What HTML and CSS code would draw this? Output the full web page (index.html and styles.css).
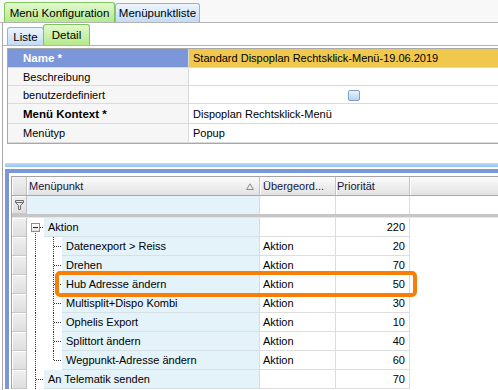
FILE: index.html
```html
<!DOCTYPE html>
<html>
<head>
<meta charset="utf-8">
<link rel="stylesheet" href="styles.css">
</head>
<body>
<div class="top-tabs">
  <div class="tab green t1">Menü Konfiguration</div>
  <div class="tab blue t2">Menüpunktliste</div>
</div>
<div class="main">
  <div class="sub-tabs">
    <div class="tab blue s1">Liste</div>
    <div class="tab green s2">Detail</div>
  </div>
  <div class="form">
    <div class="frow r-name"><div class="flabel name">Name *</div><div class="fval yellow">Standard Dispoplan Rechtsklick-Menü-19.06.2019</div></div>
    <div class="frow r-s"><div class="flabel">Beschreibung</div><div class="fval"></div></div>
    <div class="frow r-s"><div class="flabel">benutzerdefiniert</div><div class="fval"><span class="check"></span></div></div>
    <div class="frow r-l"><div class="flabel bold">Menü Kontext *</div><div class="fval">Dispoplan Rechtsklick-Menü</div></div>
    <div class="frow r-last"><div class="flabel">Menütyp</div><div class="fval">Popup</div></div>
  </div>
  <div class="splitter"></div>
  <div class="gridframe">
    <div class="grid">
      <div class="row hrow">
        <div class="c sel"></div>
        <div class="c mp">Menüpunkt<svg class="sort" width="8" height="7" viewBox="0 0 8 7"><path d="M4 0.8 L7.4 6.5 H0.6 Z" fill="none" stroke="#8a8a8a" stroke-width="1"/></svg></div>
        <div class="c ub">Übergeord...</div>
        <div class="c pr">Priorität</div>
        <div class="c fill"></div>
      </div>
      <div class="row frow2">
        <div class="c sel"><svg width="9" height="10" viewBox="0 0 9 10"><path d="M0.5 0.5 H8.5 V2.5 L5.5 5.5 V9.5 H3.5 V5.5 L0.5 2.5 Z M0.5 2.5 H8.5" fill="none" stroke="#6e6e6e" stroke-width="1"/></svg></div>
        <div class="c mp blue-bg"></div>
        <div class="c ub"></div>
        <div class="c pr"></div>
        <div class="c fill"></div>
      </div>
      <div class="sep"></div>
      <div class="row drow">
        <div class="c sel"></div>
        <div class="c tree"><span class="u1 first"><span class="box"></span></span><span class="lbl">Aktion</span></div>
        <div class="c ub"></div>
        <div class="c pr">220</div>
        <div class="c fill"></div>
      </div>
      <div class="row drow">
        <div class="c sel"></div>
        <div class="c tree"><span class="u1 pass"></span><span class="u2 tee"></span><span class="lbl">Datenexport &gt; Reiss</span></div>
        <div class="c ub">Aktion</div>
        <div class="c pr">20</div>
        <div class="c fill"></div>
      </div>
      <div class="row drow">
        <div class="c sel"></div>
        <div class="c tree"><span class="u1 pass"></span><span class="u2 tee"></span><span class="lbl">Drehen</span></div>
        <div class="c ub">Aktion</div>
        <div class="c pr">70</div>
        <div class="c fill"></div>
      </div>
      <div class="row drow hl">
        <div class="c sel"></div>
        <div class="c tree"><span class="u1 pass"></span><span class="u2 tee"></span><span class="lbl">Hub Adresse ändern</span></div>
        <div class="c ub">Aktion</div>
        <div class="c pr">50</div>
        <div class="c fill"></div>
        <div class="highlight"></div>
      </div>
      <div class="row drow">
        <div class="c sel"></div>
        <div class="c tree"><span class="u1 pass"></span><span class="u2 tee"></span><span class="lbl">Multisplit+Dispo Kombi</span></div>
        <div class="c ub">Aktion</div>
        <div class="c pr">30</div>
        <div class="c fill"></div>
      </div>
      <div class="row drow">
        <div class="c sel"></div>
        <div class="c tree"><span class="u1 pass"></span><span class="u2 tee"></span><span class="lbl">Ophelis Export</span></div>
        <div class="c ub">Aktion</div>
        <div class="c pr">10</div>
        <div class="c fill"></div>
      </div>
      <div class="row drow">
        <div class="c sel"></div>
        <div class="c tree"><span class="u1 pass"></span><span class="u2 tee"></span><span class="lbl">Splittort ändern</span></div>
        <div class="c ub">Aktion</div>
        <div class="c pr">40</div>
        <div class="c fill"></div>
      </div>
      <div class="row drow">
        <div class="c sel"></div>
        <div class="c tree"><span class="u1 pass"></span><span class="u2 elbow"></span><span class="lbl">Wegpunkt-Adresse ändern</span></div>
        <div class="c ub">Aktion</div>
        <div class="c pr">60</div>
        <div class="c fill"></div>
      </div>
      <div class="row drow">
        <div class="c sel"></div>
        <div class="c tree"><span class="u1 tee"></span><span class="lbl">An Telematik senden</span></div>
        <div class="c ub"></div>
        <div class="c pr">70</div>
        <div class="c fill"></div>
      </div>
    </div>
  </div>
</div>
</body>
</html>
```

FILE: styles.css
```css
html, body {
  margin: 0;
  padding: 0;
}
body {
  width: 498px;
  height: 390px;
  overflow: hidden;
  font-family: "Liberation Sans", Arial, sans-serif;
  font-size: 11px;
  color: #000;
  background: #fff;
}

/* ---------- tabs ---------- */
.top-tabs {
  height: 22px;
  box-sizing: content-box;
  background: #f8f8f8;
  border-bottom: 1px solid #b4b4b4;
  display: flex;
  align-items: flex-end;
  padding-left: 4px;
}
.tab {
  box-sizing: border-box;
  border: 1px solid;
  border-bottom: none;
  border-radius: 3px 3px 0 0;
  display: flex;
  align-items: center;
  justify-content: center;
  white-space: nowrap;
}
.tab.green {
  background: linear-gradient(#e2f9cf, #b3e98b);
  border-color: #80c45c;
}
.tab.blue {
  background: linear-gradient(#eef5fd, #c3dbf6);
  border-color: #8fb4e3;
}
.t1 { width: 111px; height: 20px; font-size: 11.5px; }
.t2 { width: 85px; height: 19px; font-size: 11.5px; }

.main {
  margin-left: 2px;
  border-left: 1px solid #a8a8a8;
  height: 367px;
}
.sub-tabs {
  height: 22px;
  display: flex;
  align-items: flex-end;
  padding-left: 4px;
  border-bottom: 1px solid #b4b4b4;
}
.s1 { width: 37px; height: 18px; font-size: 11.5px; }
.s2 { width: 47px; height: 21px; margin-left: -1px; font-size: 11.5px; }

/* ---------- form ---------- */
.form {
  margin: 2px 0 0 4px;
  border-top: 1px solid #a8a8a8;
  border-left: 1px solid #a8a8a8;
  border-bottom: 1px solid #a8a8a8;
}
.frow {
  display: grid;
  grid-template-columns: 181px 1fr;
  border-bottom: 1px solid #dadada;
}
.r-name { height: 18px; }
.r-s { height: 17px; }
.r-l { height: 19px; }
.r-last { height: 18px; }
.flabel {
  background: #f6f6f6;
  border-right: 1px solid #dadada;
  padding-left: 15px;
  display: flex;
  align-items: center;
}
.flabel.name {
  background: #7b97da;
  color: #fff;
  font-weight: bold;
  font-size: 11.5px;
}
.flabel.bold {
  font-weight: bold;
  font-size: 11.5px;
}
.fval {
  padding-left: 4px;
  display: flex;
  align-items: center;
  white-space: nowrap;
}
.fval.yellow {
  background: #f1c84e;
}
.check {
  margin-left: 155px;
  width: 12px;
  height: 11px;
  box-sizing: border-box;
  border: 1px solid #7f9dc4;
  border-radius: 2px;
  background: linear-gradient(#e9f2fc, #b7d3f1);
  margin-top: 1px;
}

/* ---------- splitter + grid ---------- */
.splitter {
  margin: 19px 0 0 2px;
  height: 4px;
  background: linear-gradient(#bcdff9, #8fc3ee);
}
.gridframe {
  margin: 2px 0 0 2px;
  border-top: 4px solid #7b96d9;
  border-left: 4px solid #7b96d9;
  padding: 3px 0 0 2px;
}
.grid {
  border-top: 1px solid #a4a4a4;
  border-left: 1px solid #a4a4a4;
}
.row {
  display: grid;
  grid-template-columns: 15px 233px 76px 74px 1fr;
  height: 19px;
  box-sizing: border-box;
}
.c {
  box-sizing: border-box;
  border-right: 1px solid #dcdcdc;
  display: flex;
  align-items: center;
  white-space: nowrap;
  overflow: hidden;
}
.c.fill { border-right: none; }

.hrow {
  background: linear-gradient(#fbfbfb, #ececec 60%, #e2e2e2);
  border-bottom: 1px solid #a8a8a8;
  color: #16163e;
}
.hrow .c {
  border-right: 1px solid #c4c4c4;
  box-shadow: inset 1px 0 #ffffff;
}
.hrow .mp {
  padding-left: 2px;
  justify-content: space-between;
  padding-right: 5px;
}
.hrow .ub { padding-left: 3px; }
.hrow .pr { padding-left: 1px; }
.hrow .fill { border-right: none; }

.frow2 { height: 18px; }
.frow2 .sel { justify-content: center; }
.blue-bg { background: #e4f2f9; }

.sel {
  background: linear-gradient(#f0f0f0, #dedede);
  border-right: 1px solid #c2c2c2 !important;
  border-bottom: 1px solid #c8c8c8;
  box-shadow: inset 1px 1px #ffffff;
}
.hrow .sel { border-bottom: none; }

.sep {
  height: 4px;
  background: #c6c6c6;
  border-bottom: 1px solid #e6e6e6;
  box-sizing: border-box;
}

.drow .ub,
.drow .pr {
  border-bottom: 1px solid #dedede;
}
.drow .ub { padding-left: 3px; }
.drow .pr {
  justify-content: flex-end;
  padding-right: 4px;
}
.tree {
  align-items: stretch;
}
.lbl {
  flex: 1;
  background: #e4f2f9;
  border-bottom: 1px solid #d6e1e6;
  padding-left: 4px;
  display: flex;
  align-items: center;
}

/* tree lines */
.u1, .u2 {
  flex: none;
  display: flex;
  align-items: center;
  background-repeat: no-repeat;
}
.u1 { width: 17px; }
.u2 { width: 18px; }
.u1.first {
  background-image:
    repeating-linear-gradient(to bottom, #333 0 1px, transparent 1px 2px),
    repeating-linear-gradient(to right, #333 0 1px, transparent 1px 2px);
  background-size: 1px 10px, 4px 1px;
  background-position: 8px 9px, 13px 9px;
}
.u1.pass {
  background-image: repeating-linear-gradient(to bottom, #333 0 1px, transparent 1px 2px);
  background-size: 1px 19px;
  background-position: 8px 0;
}
.u1.tee {
  background-image:
    repeating-linear-gradient(to bottom, #333 0 1px, transparent 1px 2px),
    repeating-linear-gradient(to right, #333 0 1px, transparent 1px 2px);
  background-size: 1px 19px, 8px 1px;
  background-position: 8px 0, 9px 9px;
}
.u2.tee {
  background-image:
    repeating-linear-gradient(to bottom, #333 0 1px, transparent 1px 2px),
    repeating-linear-gradient(to right, #333 0 1px, transparent 1px 2px);
  background-size: 1px 19px, 8px 1px;
  background-position: 9px 0, 10px 9px;
}
.u2.elbow {
  background-image:
    repeating-linear-gradient(to bottom, #333 0 1px, transparent 1px 2px),
    repeating-linear-gradient(to right, #333 0 1px, transparent 1px 2px);
  background-size: 1px 10px, 8px 1px;
  background-position: 9px 0, 10px 9px;
}
.box {
  margin-left: 4px;
  width: 9px;
  height: 9px;
  box-sizing: border-box;
  border: 1px solid #8c8c8c;
  background: linear-gradient(#ffffff, #e6e6e6);
  display: flex;
  align-items: center;
  justify-content: center;
}
.box::before {
  content: "";
  width: 5px;
  height: 1px;
  background: #222;
}

/* highlight annotation */
.hl { position: relative; }
.highlight {
  position: absolute;
  left: 43px;
  top: -4px;
  width: 362px;
  height: 26px;
  box-sizing: border-box;
  border: 4px solid #f97e05;
  border-radius: 5px;
  pointer-events: none;
}
```
